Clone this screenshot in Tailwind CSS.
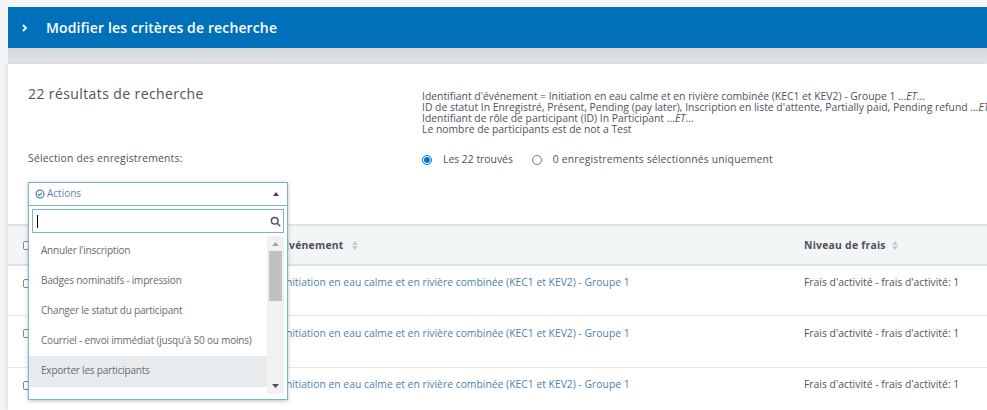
<!DOCTYPE html>
<html lang="fr">
<head>
<meta charset="utf-8">
<script src="https://cdn.jsdelivr.net/npm/@tailwindcss/browser@4"></script>
</head>
<body class="w-[987px] h-[410px] overflow-hidden bg-[#f5f5f5] font-['Open_Sans',sans-serif] text-[10.37px] text-[#51515c]">
<div class="pl-2 pt-[7px]">
  <div class="h-[41px] bg-[#0070bb] flex items-center text-white font-semibold text-[14px] pl-[14px] pb-[1px]">
    <svg class="w-[6px] h-[8px] mr-[18px] mt-[2px]" viewBox="0 0 6 8" fill="none" stroke="#fff" stroke-width="1.8"><path d="M1 1l3 3-3 3"/></svg>
    <span class="tracking-[0.13px]">Modifier les critères de recherche</span>
  </div>
  <div class="h-[16px] bg-gradient-to-b from-[#d5d8da] to-[#e2e4e6]"></div>
  <div class="relative bg-white h-[346px] shadow-[-2px_0_5px_rgba(0,0,0,0.08)]">
    <div class="flex pl-5 h-[160px]">
      <div class="w-[394px] shrink-0">
        <h2 class="text-[14px] leading-[18px] pt-[21px] tracking-[0.4px] text-[#51515c] font-normal">22 résultats de recherche</h2>
        <p class="mt-[48px] leading-[14px] tracking-[0.2px]">Sélection des enregistrements:</p>
      </div>
      <div class="min-w-0 whitespace-nowrap">
        <div class="pt-[27px] leading-[11px]">
          <p>Identifiant d'événement = Initiation en eau calme et en rivière combinée (KEC1 et KEV2) - Groupe 1 ...<i>ET</i>...</p>
          <p>ID de statut In Enregistré, Présent, Pending (pay later), Inscription en liste d'attente, Partially paid, Pending refund ...<i>ET</i>...</p>
          <p>Identifiant de rôle de participant (ID) In Participant ...<i>ET</i>...</p>
          <p>Le nombre de participants est de not a Test</p>
        </div>
        <div class="flex items-center mt-[17px] h-[16px]">
          <span class="w-[10px] h-[10px] rounded-full border border-[#0075d8] flex items-center justify-center mr-[11px]"><span class="w-[6px] h-[6px] rounded-full bg-[#0075d8]"></span></span>
          <span class="mr-[19px]">Les 22 trouvés</span>
          <span class="w-[10px] h-[10px] rounded-full border border-[#767676] mr-[11px]"></span>
          <span class="tracking-[0.17px]">0 enregistrements sélectionnés uniquement</span>
        </div>
      </div>
    </div>
    <table class="w-full border-collapse table-fixed">
      <thead>
        <tr class="h-[40px] bg-[#f3f6f6] border-t-2 border-b-2 border-[#dbe3e5]">
          <th class="w-[250px] text-left font-normal pl-[15px]"><span class="block w-[8px] h-[9px] border border-[#888] rounded-[2px] bg-white"></span></th>
          <th class="text-left font-bold tracking-[0.25px] pl-[25px] pt-[1px] w-[546px]">Événement <span class="inline-block ml-[5px] align-middle"><svg class="w-[6px] h-[9px]" viewBox="0 0 6 9" fill="#c3cbd1"><path d="M3 0l3 4H0zM3 9L0 5h6z"/></svg></span></th>
          <th class="text-left font-bold tracking-[0.25px] pt-[1px]">Niveau de frais <span class="inline-block ml-[3px] align-middle"><svg class="w-[6px] h-[9px]" viewBox="0 0 6 9" fill="#c3cbd1"><path d="M3 0l3 4H0zM3 9L0 5h6z"/></svg></span></th>
        </tr>
      </thead>
      <tbody>
        <tr class="h-[50px] border-b border-[#e6e9ea] align-top">
          <td class="pl-[15px] pt-[13px]"><span class="block w-[8px] h-[9px] border border-[#888] rounded-[2px]"></span></td>
          <td class="pl-[25px] pt-[9px] text-[#4f7fa8] whitespace-nowrap overflow-visible">Initiation en eau calme et en rivière combinée (KEC1 et KEV2) - Groupe 1</td>
          <td class="pt-[9px] whitespace-nowrap">Frais d'activité - frais d'activité: 1</td>
        </tr>
        <tr class="h-[52px] border-b border-[#e6e9ea] align-top">
          <td class="pl-[15px] pt-[13px]"><span class="block w-[8px] h-[9px] border border-[#888] rounded-[2px]"></span></td>
          <td class="pl-[25px] pt-[10px] text-[#4f7fa8] whitespace-nowrap">Initiation en eau calme et en rivière combinée (KEC1 et KEV2) - Groupe 1</td>
          <td class="pt-[10px] whitespace-nowrap">Frais d'activité - frais d'activité: 1</td>
        </tr>
        <tr class="h-[51px] align-top">
          <td class="pl-[15px] pt-[13px]"><span class="block w-[8px] h-[9px] border border-[#888] rounded-[2px]"></span></td>
          <td class="pl-[25px] pt-[9px] text-[#4f7fa8] whitespace-nowrap">Initiation en eau calme et en rivière combinée (KEC1 et KEV2) - Groupe 1</td>
          <td class="pt-[9px] whitespace-nowrap">Frais d'activité - frais d'activité: 1</td>
        </tr>
      </tbody>
    </table>
    <div class="absolute left-5 top-[118px] w-[260px] h-[218px] shadow-[0_1px_4px_rgba(0,0,0,0.25)]">
      <div class="h-[24px] border border-[#7fb0cc] bg-white flex items-center pl-[6px] pr-[8px] pb-[1px] text-[#5a86ab]">
        <svg class="w-[10px] h-[10px] mr-[2px]" viewBox="0 0 10 10" fill="none" stroke="#4f86b0" stroke-width="1.2"><circle cx="5" cy="5" r="3.9"/><path d="M3 5l1.5 1.5L7 3.8"/></svg>
        <span class="text-[10px]">Actions</span>
        <svg class="ml-auto w-[6px] h-[4px]" viewBox="0 0 6 4" fill="#444"><path d="M3 0l3 4H0z"/></svg>
      </div>
      <div class="h-[194px] border border-t-0 border-[#7fb0cc] bg-white">
        <div class="pt-[3px] px-[3px]">
          <div class="h-[24px] border border-[#7fb0cc] flex items-center pl-[4px] pr-[2px]">
            <span class="w-px h-[13px] bg-black"></span>
            <svg class="ml-auto w-[11px] h-[11px]" viewBox="0 0 11 11" fill="none" stroke="#555" stroke-width="1.5"><circle cx="4.7" cy="4.7" r="3.3"/><path d="M7.2 7.2l3 3"/></svg>
          </div>
        </div>
        <div class="flex h-[167px] mt-[3px]">
          <ul class="w-[238px] text-[#666b70] text-[10px] tracking-[-0.2px]">
            <li class="h-[30px] pl-[12px] pt-[7px] leading-[14px]">Annuler l'inscription</li>
            <li class="h-[30px] pl-[12px] pt-[7px] leading-[14px]">Badges nominatifs - impression</li>
            <li class="h-[30px] pl-[12px] pt-[7px] leading-[14px]">Changer le statut du participant</li>
            <li class="h-[30px] pl-[12px] pt-[7px] leading-[14px]">Courriel - envoi immédiat (jusqu'à 50 ou moins)</li>
            <li class="h-[31px] pl-[12px] pt-[7px] leading-[14px] bg-[#e8ecee]">Exporter les participants</li>
          </ul>
          <div class="w-[17px] bg-[#f1f1f1] flex flex-col items-center h-[158px]">
            <svg class="w-[7px] h-[4px] mt-[6px]" viewBox="0 0 7 4" fill="#a3a3a3"><path d="M3.5 0L7 4H0z"/></svg>
            <div class="w-[13px] h-[50px] bg-[#c1c1c1] mt-[5px]"></div>
            <svg class="w-[7px] h-[4px] mt-auto mb-[6px]" viewBox="0 0 7 4" fill="#505050"><path d="M0 0h7L3.5 4z"/></svg>
          </div>
        </div>
      </div>
    </div>
  </div>
</div>
</body>
</html>
